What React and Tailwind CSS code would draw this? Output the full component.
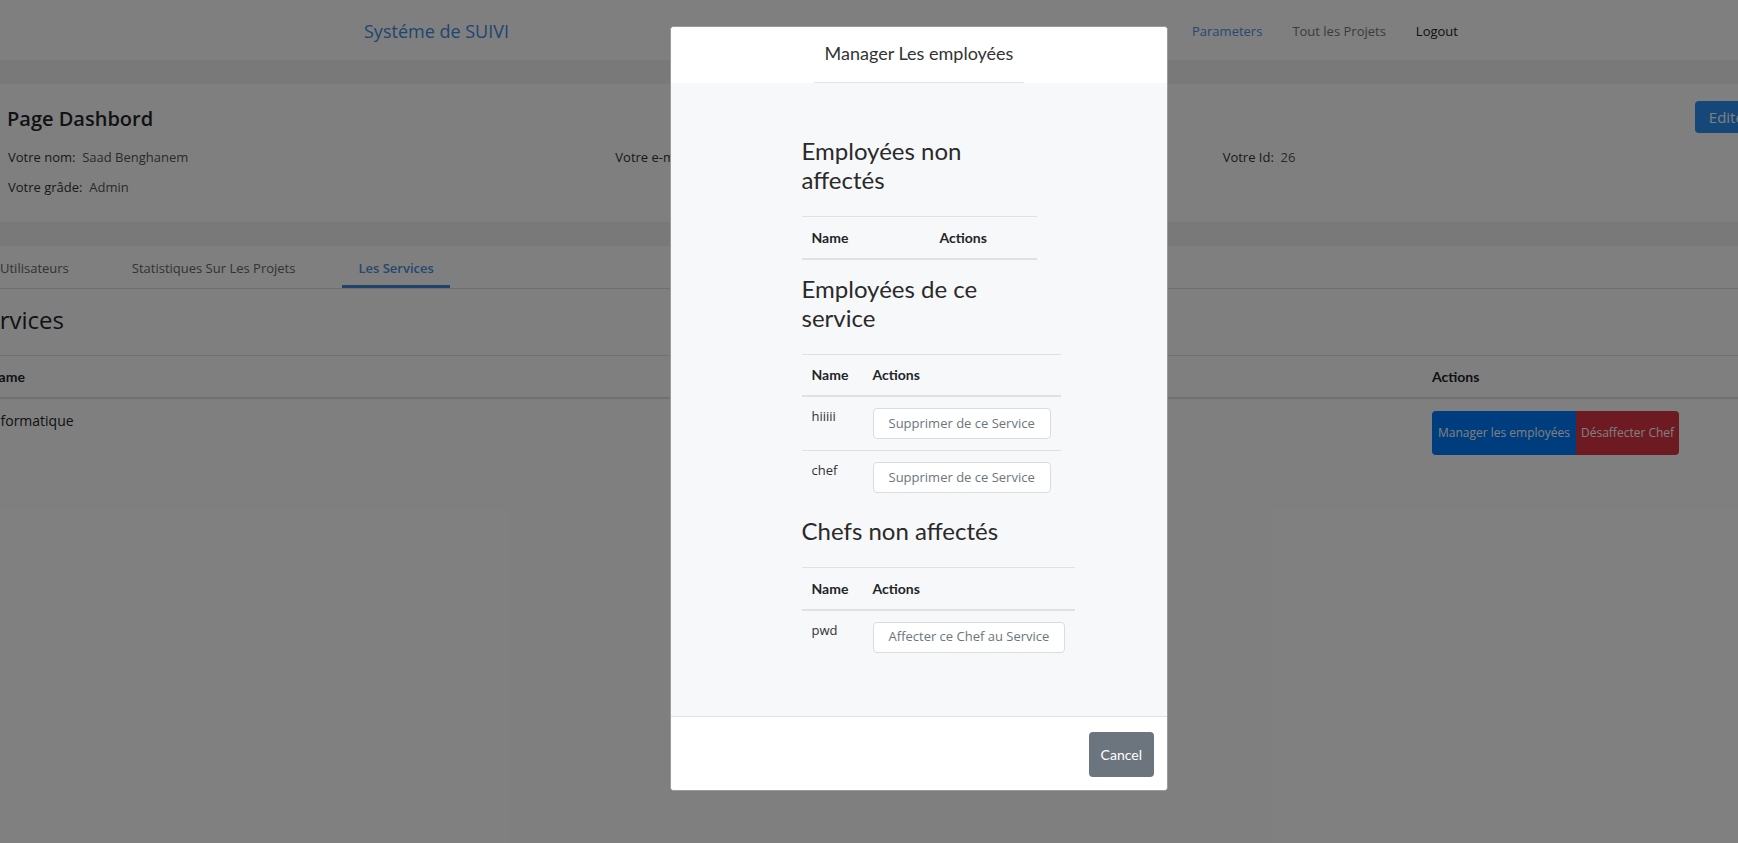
const seg = { fontFamily: '"Open Sans", "Noto Sans", sans-serif' };
const lato = { fontFamily: "Lato, sans-serif" };

const Navbar = () => (
  <div className="flex h-[60px] items-center bg-white pt-[2px]">
    <a className="ml-[364px] text-[18px] text-[#3d8be0]">Systéme de SUIVI</a>
    <div className="ml-[683px] flex gap-[30px] pt-[1px] text-[13px]">
      <span className="text-[#4a90e2]">Parameters</span>
      <span className="text-[#777]">Tout les Projets</span>
      <span className="text-[#222]">Logout</span>
    </div>
  </div>
);

const Profile = () => (
  <div className="h-[138px] bg-white">
    <div className="flex items-start justify-between">
      <h4 className="ml-[7px] mt-[20px] text-[20px] font-semibold text-[#212529]">
        Page Dashbord
      </h4>
      <button className="mr-[-26px] mt-[17px] h-[32px] rounded-[4px] bg-[#2b8ef0] px-[14px] text-[15px] text-white">
        Editer
      </button>
    </div>
    <div className="mt-[8px] grid w-[1830px] grid-cols-3 pl-[8px] text-[13px] text-[#333]">
      <div className="leading-[30px]">
        Votre nom:&nbsp; <span className="text-[#555]">Saad Benghanem</span>
      </div>
      <div className="leading-[30px]">
        Votre e-mail:&nbsp; <span className="text-[#555]">saad@gmail.com</span>
      </div>
      <div className="leading-[30px]">
        Votre Id:&nbsp; <span className="text-[#555]">26</span>
      </div>
      <div className="leading-[30px]">
        Votre grâde:&nbsp; <span className="text-[#555]">Admin</span>
      </div>
    </div>
  </div>
);

const Tabs = () => (
  <div className="flex h-[43px] items-stretch gap-[31px] border-b border-[#dcdcdc] text-[13px]">
    <div className="-ml-[16px] flex items-center px-[16px] pt-[4px] text-[#666]">Utilisateurs</div>
    <div className="flex items-center px-[16px] pt-[4px] text-[#666]">Statistiques Sur Les Projets</div>
    <div className="flex items-center border-b-[3px] border-[#3f86d6] px-[16px] pt-[6px] font-semibold text-[#4a8ee0]">
      Les Services
    </div>
  </div>
);

const Services = () => (
  <div className="-ml-[24px]">
    <h2 className="-ml-[3px] mb-[18px] mt-[14px] h-[34px] text-[24px] leading-[34px] text-[#212529]">Services</h2>
    <table className="w-[1800px] border-collapse text-left text-[14px] text-[#212529]">
      <thead>
        <tr className="border-t border-b-2 border-[#dee2e6]">
          <th className="h-[42px] w-[1444px] px-[12px] font-bold" style={lato}>
            Name
          </th>
          <th className="px-[12px] font-bold" style={lato}>
            Actions
          </th>
        </tr>
      </thead>
      <tbody>
        <tr>
          <td className="px-[12px] pt-[11px] align-top">Informatique</td>
          <td className="px-[12px] pt-[12px] align-top">
            <div className="flex">
              <button className="h-[44px] whitespace-nowrap rounded-l-[4px] bg-[#007bff] px-[6px] text-[12px] text-white">
                Manager les employées
              </button>
              <button className="h-[44px] whitespace-nowrap rounded-r-[4px] bg-[#dc3545] px-[5px] text-[12px] text-white">
                Désaffecter Chef
              </button>
            </div>
          </td>
        </tr>
      </tbody>
    </table>
  </div>
);

const SmallTable = ({ rows, label }) => (
  <table className="mb-[12px] w-full border-collapse text-left text-[14px] text-[#212529]">
    <thead>
      <tr className="border-t border-b-2 border-[#dee2e6]">
        <th className="h-[42px] px-[10px] font-bold">
          <div className="w-[41px]">Name</div>
        </th>
        <th className="px-[10px] font-bold">Actions</th>
      </tr>
    </thead>
    <tbody>
      {rows.map((r, i) => (
        <tr key={r} className={i < rows.length - 1 ? "border-b border-[#dee2e6]" : ""}>
          <td className="px-[10px] pt-[10px] align-top text-[13px] text-[#333]" style={seg}>
            {r}
          </td>
          <td className="px-[10px] py-[11px] align-top">
            <button
              className="h-[31px] whitespace-nowrap rounded-[4px] border border-[#dadde0] bg-white px-[15px] text-[13px] text-[#6c757d]"
              style={seg}
            >
              {label}
            </button>
          </td>
        </tr>
      ))}
    </tbody>
  </table>
);

const Heading = ({ children }) => (
  <h3 className="mb-[22px] text-[24px] leading-[29px] text-[#2a2a2a]">{children}</h3>
);

const Modal = () => (
  <div
    className="absolute left-[670px] top-[26px] flex h-[765px] w-[498px] flex-col overflow-hidden rounded-[4px] border border-[#9a9a9a] bg-white"
    style={lato}
  >
    <div className="flex h-[56px] shrink-0 flex-col items-center bg-white">
      <h5 className="mt-[13px] flex-1 text-[18px] text-[#333]">Manager Les employées</h5>
      <div className="h-px w-[210px] bg-[#e2e4e6]" />
    </div>
    <div className="flex-1 bg-[#f7f8fa] pt-[53px]">
      <div className="mx-auto w-[235px]">
        <Heading>Employées non affectés</Heading>
        <table className="mb-[14px] w-full border-collapse text-left text-[14px] text-[#212529]">
          <thead>
            <tr className="border-t border-b-2 border-[#dee2e6]">
              <th className="h-[42px] w-[128px] px-[10px] font-bold">Name</th>
              <th className="px-[10px] font-bold">Actions</th>
            </tr>
          </thead>
        </table>
        <Heading>Employées de ce service</Heading>
        <SmallTable rows={["hiiiii", "chef"]} label="Supprimer de ce Service" />
        <Heading>Chefs non affectés</Heading>
        <SmallTable rows={["pwd"]} label="Affecter ce Chef au Service" />
      </div>
    </div>
    <div className="flex h-[74px] shrink-0 items-start justify-end border-t border-[#dee2e6] bg-white pr-[13px] pt-[15px]">
      <button className="h-[45px] rounded-[4px] bg-[#6c757d] px-[12px] text-[14px] text-white">Cancel</button>
    </div>
  </div>
);

export default function App() {
  return (
    <div className="relative h-[843px] w-full overflow-hidden bg-white" style={seg}>
      <Navbar />
      <div className="h-[24px] bg-[#f2f2f2]" />
      <Profile />
      <div className="h-[24px] bg-[#f2f2f2]" />
      <Tabs />
      <Services />
      <div className="absolute inset-0 bg-black/50" />
      <Modal />
    </div>
  );
}
